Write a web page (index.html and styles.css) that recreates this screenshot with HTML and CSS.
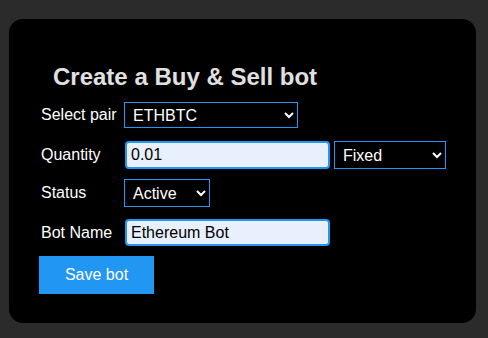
FILE: index.html
```html
<!DOCTYPE html>
<html lang="en">
<head>
  <meta charset="UTF-8">
  <title>Create bot</title>
  <link rel="stylesheet" href="styles.css">
</head>
<body>

  <div class="bot-card">
    <h2>Create a Buy &amp; Sell bot</h2>

    <div class="form-row row-pair">
      <label class="form-label" for="pair">Select pair</label>
      <select id="pair" class="field-select pair-select">
        <option>ETHBTC</option>
        <option>BTCUSDT</option>
        <option>ETHUSDT</option>
      </select>
    </div>

    <div class="form-row row-qty">
      <label class="form-label" for="quantity">Quantity</label>
      <input id="quantity" class="field-input" type="text" value="0.01">
      <select class="field-select qty-select">
        <option>Fixed</option>
        <option>Percent</option>
      </select>
    </div>

    <div class="form-row row-status">
      <label class="form-label" for="status">Status</label>
      <select id="status" class="field-select status-select">
        <option>Active</option>
        <option>Paused</option>
      </select>
    </div>

    <div class="form-row row-name">
      <label class="form-label" for="botName">Bot Name</label>
      <input id="botName" class="field-input name-input" type="text" value="Ethereum Bot">
    </div>

    <button class="save-btn">Save bot</button>
  </div>

</body>
</html>
```

FILE: styles.css
```css
body {
  margin: 0;
  background-color: #2b2b2b;
  font-family: 'Liberation Sans', Arial, sans-serif;
  color: #fff;
}

.bot-card {
  margin: 19px 12px 0 9px;
  height: 304px;
  box-sizing: border-box;
  padding: 44px 0 0 30px;
  background: #000;
  border-radius: 14px;
}

h2 {
  margin: 0 0 11px 14px;
  font-size: 24px;
  line-height: 28px;
  color: #e0e0e0;
}

.form-row {
  display: flex;
  align-items: center;
}

.form-label {
  width: 85px;
  padding-left: 2px;
  box-sizing: border-box;
  font-size: 16px;
}

.field-select {
  height: 26px;
  padding: 0 4px;
  background: #000;
  color: #fff;
  border: 1px solid #2196f3;
  border-radius: 0;
  font-family: 'Liberation Sans', Arial, sans-serif;
  font-size: 16px;
  outline: none;
}

.pair-select {
  width: 174px;
}

.qty-select {
  width: 112px;
  height: 28px;
  margin-left: 4px;
}

.status-select {
  width: 86px;
  height: 28px;
}

.field-input {
  width: 205px;
  height: 28px;
  box-sizing: border-box;
  margin-left: 1px;
  padding: 0 4px;
  background: #e8f0fe;
  color: #000;
  border: 2px solid #2196f3;
  border-radius: 4px;
  font-family: 'Liberation Sans', Arial, sans-serif;
  font-size: 16px;
  outline: none;
}

.name-input {
  height: 27px;
}

.row-qty {
  margin-top: 13px;
}

.row-status {
  margin-top: 10px;
}

.row-name {
  margin-top: 12px;
}

.save-btn {
  display: block;
  margin-top: 10px;
  width: 115px;
  height: 38px;
  background: #2196f3;
  color: #fff;
  border: none;
  font-family: 'Liberation Sans', Arial, sans-serif;
  font-size: 16px;
  cursor: pointer;
}
```
